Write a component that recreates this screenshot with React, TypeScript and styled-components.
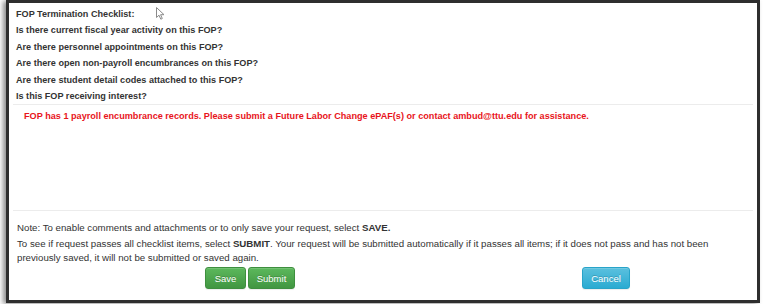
import React from 'react';
import styled, { createGlobalStyle } from 'styled-components';

const GlobalStyle = createGlobalStyle`
  html, body {
    margin: 0;
    padding: 0;
    background: #ffffff;
  }

  body {
    font-family: 'Liberation Sans', Arial, sans-serif;
    color: #333333;
  }
`;

const Screen = styled.div`
  position: relative;
  width: 763px;
  height: 304px;
  overflow: hidden;
  background: #ffffff;
`;

const Panel = styled.section`
  box-sizing: border-box;
  display: flex;
  flex-direction: column;
  width: 754px;
  height: 303px;
  margin-left: 6px;
  border: 3px solid #2e2e2e;
  background: #ffffff;
  box-shadow: -3px 1px 5px rgba(0, 0, 0, 0.45);
`;

const Checklist = styled.ul`
  list-style: none;
  margin: 0;
  padding: 3px 0 0 7px;
`;

const CheckItem = styled.li`
  height: 16.4px;
  line-height: 16.4px;
  font-size: 9.1px;
  font-weight: 700;
  color: #333333;
  white-space: nowrap;
`;

const Divider = styled.hr`
  margin: 0 4px;
  border: 0;
  border-top: 1px solid #ececec;
`;

const Message = styled.p`
  margin: 0;
  padding: 2px 0 0 15px;
  height: 19px;
  line-height: 19px;
  font-size: 9.15px;
  font-weight: 700;
  color: #e8141b;
  white-space: nowrap;
`;

const Spacer = styled.div`
  flex: 1;
`;

const Notes = styled.div`
  width: 712px;
  padding: 10px 0 0 8px;
`;

const NoteLine = styled.p<{ $gap?: number }>`
  margin: 0 0 ${({ $gap }) => $gap ?? 0}px;
  font-size: 9.7px;
  line-height: 14px;
  color: #333333;

  b {
    font-weight: 700;
  }
`;

const ButtonRow = styled.div`
  display: flex;
  align-items: center;
  gap: 2px;
  padding: 2px 127px 11px 196px;
`;

const Button = styled.button<{ $variant: 'success' | 'info'; $width: number }>`
  box-sizing: border-box;
  width: ${({ $width }) => $width}px;
  height: 22px;
  padding: 0;
  border-radius: 3px;
  border: 1px solid ${({ $variant }) => ($variant === 'success' ? '#3e8f3e' : '#28a4c9')};
  background-image: ${({ $variant }) =>
    $variant === 'success'
      ? 'linear-gradient(to bottom, #5cb85c 0%, #419641 100%)'
      : 'linear-gradient(to bottom, #5bc0de 0%, #2aabd2 100%)'};
  box-shadow: inset 0 1px 0 rgba(255, 255, 255, 0.15), 0 1px 1px rgba(0, 0, 0, 0.075);
  color: #ffffff;
  font-family: 'Liberation Sans', Arial, sans-serif;
  font-size: 9.5px;
  text-shadow: 0 -1px 0 rgba(0, 0, 0, 0.2);
  cursor: pointer;

  &:last-child {
    margin-left: auto;
  }
`;

const Cursor = styled.svg`
  position: absolute;
  left: 156px;
  top: 7px;
  width: 9px;
  height: 13px;
`;

const questions = [
  'Is there current fiscal year activity on this FOP?',
  'Are there personnel appointments on this FOP?',
  'Are there open non-payroll encumbrances on this FOP?',
  'Are there student detail codes attached to this FOP?',
  'Is this FOP receiving interest?',
];

export default function App() {
  return (
    <>
      <GlobalStyle />
      <Screen>
        <Panel>
          <Checklist>
            <CheckItem>FOP Termination Checklist:</CheckItem>
            {questions.map((q) => (
              <CheckItem key={q}>{q}</CheckItem>
            ))}
          </Checklist>
          <Divider />
          <Message>
            FOP has 1 payroll encumbrance records. Please submit a Future Labor Change ePAF(s) or
            contact ambud@ttu.edu for assistance.
          </Message>
          <Spacer />
          <Divider />
          <Notes>
            <NoteLine $gap={2}>
              Note: To enable comments and attachments or to only save your request, select{' '}
              <b>SAVE.</b>
            </NoteLine>
            <NoteLine>
              To see if request passes all checklist items, select <b>SUBMIT</b>. Your request will
              be submitted automatically if it passes all items; if it does not pass and has not been
              previously saved, it will not be submitted or saved again.
            </NoteLine>
          </Notes>
          <ButtonRow>
            <Button $variant="success" $width={41}>Save</Button>
            <Button $variant="success" $width={47}>Submit</Button>
            <Button $variant="info" $width={48}>Cancel</Button>
          </ButtonRow>
        </Panel>
        <Cursor viewBox="0 0 9 13">
          <path
            d="M0.5 0.5 L0.5 10.5 L3 8.2 L4.8 12.2 L6.3 11.5 L4.6 7.7 L8 7.7 Z"
            fill="#ffffff"
            stroke="#8a8a8a"
            strokeWidth="1"
            strokeLinejoin="round"
          />
        </Cursor>
      </Screen>
    </>
  );
}
